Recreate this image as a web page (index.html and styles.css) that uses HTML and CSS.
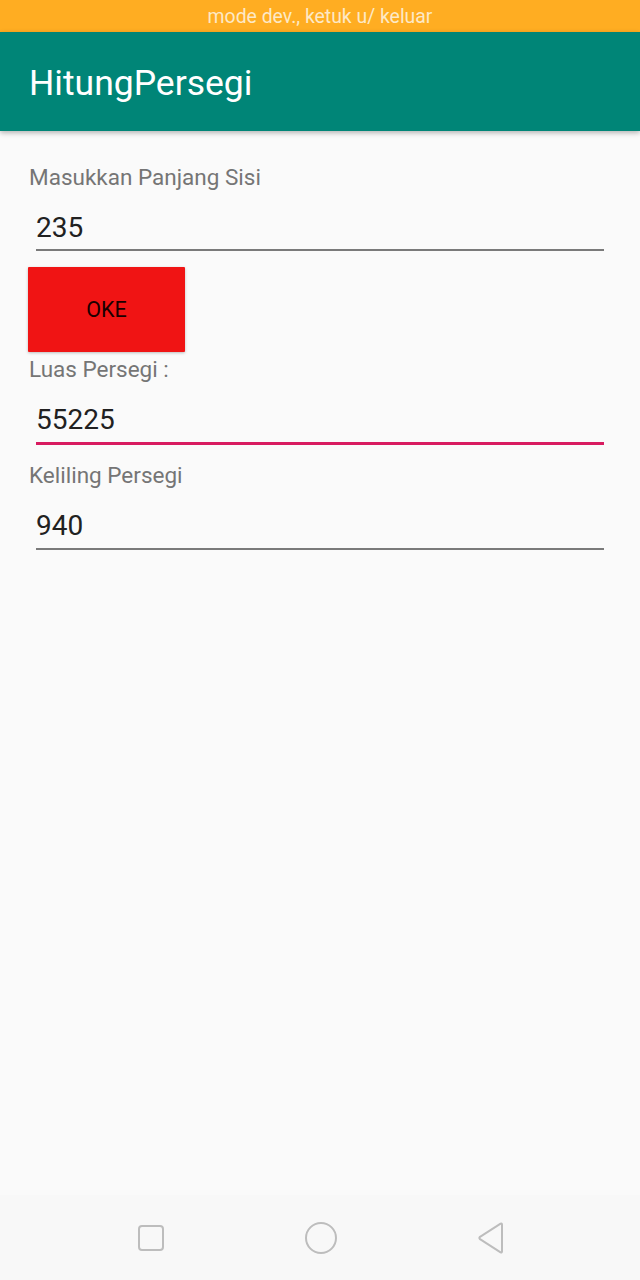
FILE: index.html
```html
<!DOCTYPE html>
<html lang="id">
<head>
<meta charset="utf-8">
<title>HitungPersegi</title>
<link rel="stylesheet" href="styles.css">
</head>
<body>
<div class="screen">
  <div class="status">mode dev., ketuk u/ keluar</div>
  <header class="toolbar"><h1 class="title">HitungPersegi</h1></header>
  <main class="content">
    <div class="label first">Masukkan Panjang Sisi</div>
    <div class="field f1">235</div>
    <button class="btn">OKE</button>
    <div class="label l2">Luas Persegi :</div>
    <div class="field focused">55225</div>
    <div class="label l3">Keliling Persegi</div>
    <div class="field f3">940</div>
  </main>
  <nav class="navbar">
    <svg class="nav-icon" width="30" height="30" viewBox="0 0 30 30"><rect x="3" y="3" width="24" height="24" rx="3" fill="none" stroke="#bdbdbd" stroke-width="2"/></svg>
    <svg class="nav-icon" width="34" height="34" viewBox="0 0 34 34"><circle cx="17" cy="17" r="15" fill="none" stroke="#bdbdbd" stroke-width="2"/></svg>
    <svg class="nav-icon" width="30" height="34" viewBox="0 0 30 34"><path d="M26 3.5 L26 30.5 Q26 32 24.6 31.3 L4 18.2 Q2.8 17 4 15.8 L24.6 2.7 Q26 2 26 3.5 Z" fill="none" stroke="#bdbdbd" stroke-width="2" stroke-linejoin="round"/></svg>
  </nav>
</div>
</body>
</html>
```
FILE: styles.css
```css
* { box-sizing: border-box; }
html, body { margin: 0; padding: 0; }
body {
  font-family: Roboto, "Noto Sans", "Liberation Sans", sans-serif;
  background: #fafafa;
}
.screen {
  height: 1280px;
  display: flex;
  flex-direction: column;
  overflow: hidden;
}
.status {
  height: 32px;
  background: #ffad22;
  color: #fde9c6;
  font-size: 19.4px;
  line-height: 34px;
  text-align: center;
  flex: none;
}
.toolbar {
  height: 99px;
  background: #008577;
  flex: none;
  display: flex;
  align-items: center;
  padding-left: 29px;
  box-shadow: 0 2px 5px rgba(0,0,0,0.28);
  position: relative;
  z-index: 1;
}
.title {
  margin: 0;
  color: #ffffff;
  font-weight: 400;
  font-size: 35.5px;
  line-height: 40px;
  padding-top: 2px;
}
.content {
  flex: 1;
  display: flex;
  flex-direction: column;
  align-items: stretch;
  padding: 34px 29px 0 29px;
}
.label {
  font-size: 22.5px;
  line-height: 24px;
  color: #757575;
}
.l2 { margin-top: 5px; }
.l3 { margin-top: 18px; }
.field {
  margin: 23px 7px 0 7px;
  font-size: 28px;
  line-height: 32px;
  color: #212121;
  padding-bottom: 5px;
  border-bottom: 2px solid #7a7a7a;
}
.field.f3 { padding-bottom: 6px; }
.field.focused {
  padding-bottom: 6px;
  border-bottom: 3px solid #d81b60;
}
.btn {
  align-self: flex-start;
  margin-top: 16px;
  margin-left: -1px;
  width: 157px;
  height: 85px;
  border: none;
  border-radius: 1px;
  background: #f01414;
  color: #1a0000;
  font-family: inherit;
  font-size: 21.5px;
  padding: 0;
  box-shadow: 0 1px 3px rgba(0,0,0,0.25);
}
.navbar {
  height: 85px;
  flex: none;
  background: #f8f8f8;
  display: flex;
  align-items: center;
  justify-content: space-between;
  padding: 0 134px 0 136px;
}
.nav-icon { display: block; }
```
